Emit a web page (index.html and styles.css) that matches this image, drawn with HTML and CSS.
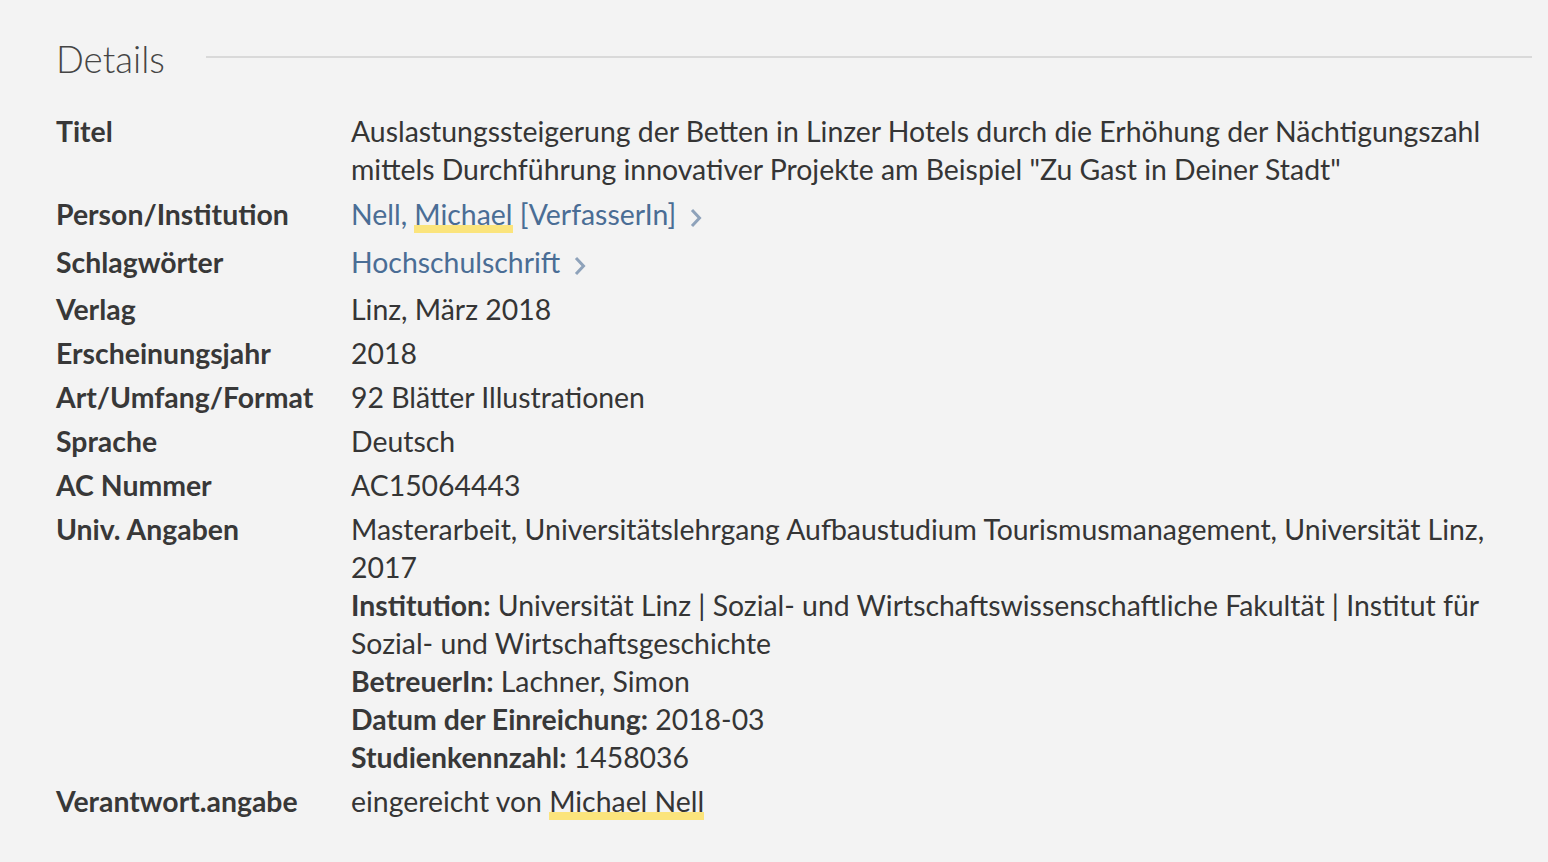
FILE: index.html
```html
<!DOCTYPE html>
<html lang="de">
<head>
<meta charset="utf-8">
<title>Details</title>
<link rel="stylesheet" href="styles.css">
</head>
<body>
<section class="details">
  <header class="details-head">
    <h2 class="details-title">Details</h2>
    <span class="details-rule"></span>
  </header>
  <div class="rows">
    <div class="row">
      <div class="label">Titel</div>
      <div class="value">Auslastungssteigerung der Betten in Linzer Hotels durch die Erhöhung der Nächtigungszahl mittels Durchführung innovativer Projekte am Beispiel "Zu Gast in Deiner Stadt"</div>
    </div>
    <div class="row row-link">
      <div class="label">Person/Institution</div>
      <div class="value"><a class="link" href="#">Nell, <span class="hl">Michael</span> [VerfasserIn]</a><svg class="chev" viewBox="0 0 13 20" width="13" height="20"><path d="M2 2 L9.5 10 L2 18" fill="none" stroke="currentColor" stroke-width="3"/></svg></div>
    </div>
    <div class="row row-link">
      <div class="label">Schlagwörter</div>
      <div class="value"><a class="link" href="#">Hochschulschrift</a><svg class="chev" viewBox="0 0 13 20" width="13" height="20"><path d="M2 2 L9.5 10 L2 18" fill="none" stroke="currentColor" stroke-width="3"/></svg></div>
    </div>
    <div class="row">
      <div class="label">Verlag</div>
      <div class="value">Linz, März 2018</div>
    </div>
    <div class="row">
      <div class="label">Erscheinungsjahr</div>
      <div class="value">2018</div>
    </div>
    <div class="row">
      <div class="label">Art/Umfang/Format</div>
      <div class="value">92 Blätter Illustrationen</div>
    </div>
    <div class="row">
      <div class="label">Sprache</div>
      <div class="value">Deutsch</div>
    </div>
    <div class="row">
      <div class="label">AC Nummer</div>
      <div class="value">AC15064443</div>
    </div>
    <div class="row">
      <div class="label">Univ. Angaben</div>
      <div class="value">
        <div>Masterarbeit, Universitätslehrgang Aufbaustudium Tourismusmanagement, Universität Linz, 2017</div>
        <div><b>Institution:</b> Universität Linz | Sozial- und Wirtschaftswissenschaftliche Fakultät | Institut für Sozial- und Wirtschaftsgeschichte</div>
        <div><b>BetreuerIn:</b> Lachner, Simon</div>
        <div><b>Datum der Einreichung:</b> 2018-03</div>
        <div><b>Studienkennzahl:</b> 1458036</div>
      </div>
    </div>
    <div class="row">
      <div class="label">Verantwort.angabe</div>
      <div class="value">eingereicht von <span class="hl">Michael Nell</span></div>
    </div>
  </div>
</section>
</body>
</html>
```
FILE: styles.css
```css
html, body {
  margin: 0;
  background: #f3f3f3;
}
body {
  font-family: "Lato", "Open Sans", sans-serif;
  color: #353535;
}
.details {
  padding: 37px 16px 0 56px;
}
.details-head {
  display: flex;
  align-items: center;
  gap: 41px;
  height: 44px;
}
.details-title {
  margin: 0;
  font-size: 36.7px;
  font-weight: 300;
  line-height: 44px;
  color: #454545;
}
.details-rule {
  flex: 1;
  height: 2px;
  background: #d9d9d9;
  margin-top: -4px;
}
.rows {
  display: flex;
  flex-direction: column;
  gap: 6px;
  margin-top: 31px;
}
.row {
  display: grid;
  grid-template-columns: 295px 1fr;
  font-size: 28.4px;
  line-height: 38px;
}
.row-link {
  padding: 1px 0 3px;
}
.label {
  font-weight: 700;
  color: #383838;
}
.value b {
  font-weight: 700;
  color: #383838;
}
.link {
  color: #4a6d95;
  text-decoration: none;
}
.chev {
  color: #8ea2ba;
  margin-left: 14px;
  vertical-align: -3px;
}
.hl {
  padding-bottom: 2px;
  background: linear-gradient(#fbe47c, #fbe47c) left bottom / 100% 8px no-repeat;
}
```
